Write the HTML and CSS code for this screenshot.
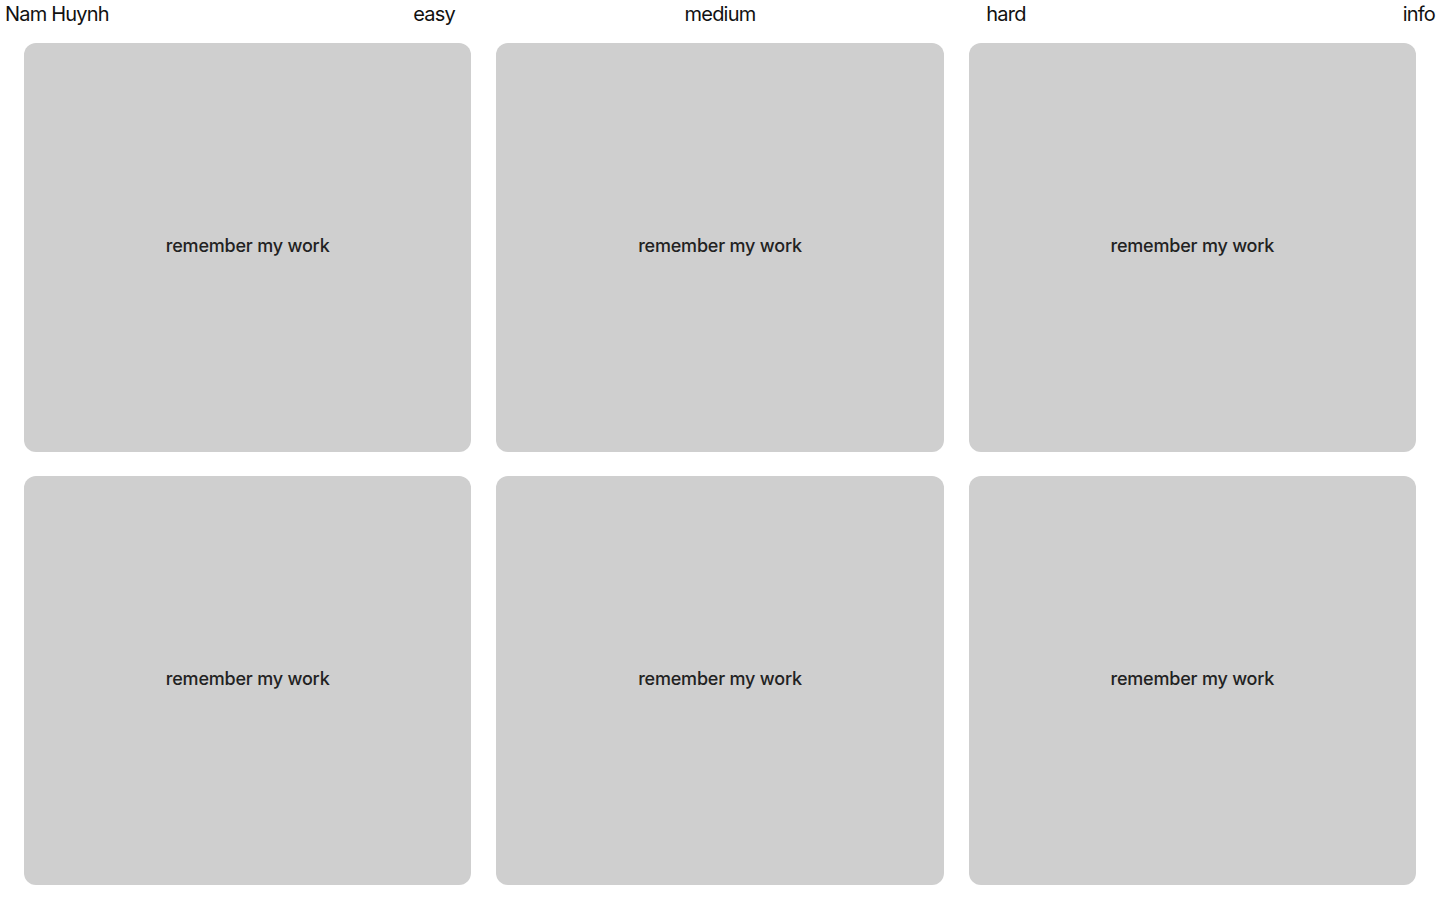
FILE: index.html
```html
<!DOCTYPE html>
<html lang="en">
<head>
  <meta charset="UTF-8">
  <meta name="viewport" content="width=device-width, initial-scale=1.0">
  <title>Nam Huynh</title>
  <link rel="stylesheet" href="styles.css">
</head>
<body>
  <nav class="nav">
    <a class="nav-item nav-name" href="#">Nam Huynh</a>
    <a class="nav-item" href="#">easy</a>
    <a class="nav-item" href="#">medium</a>
    <a class="nav-item" href="#">hard</a>
    <a class="nav-item nav-info" href="#">info</a>
  </nav>

  <main class="grid">
    <div class="card"><span>remember my work</span></div>
    <div class="card"><span>remember my work</span></div>
    <div class="card"><span>remember my work</span></div>
    <div class="card"><span>remember my work</span></div>
    <div class="card"><span>remember my work</span></div>
    <div class="card"><span>remember my work</span></div>
  </main>
</body>
</html>
```

FILE: styles.css
```css
body {
  margin: 0;
  background: #fff;
  font-family: Inter, "Liberation Sans", Arial, sans-serif;
  color: #111;
}
.nav {
  display: grid;
  grid-template-columns: repeat(5, 1fr);
  padding: 0 5px;
  height: 28px;
  align-items: center;
}
.nav-item {
  color: #111;
  text-decoration: none;
  font-size: 20px;
  letter-spacing: -0.8px;
  text-align: center;
}
.nav-name {
  text-align: left;
}
.nav-info {
  text-align: right;
}
.grid {
  display: grid;
  grid-template-columns: repeat(3, 1fr);
  gap: 24px 25px;
  padding: 15px 24px 0;
}
.card {
  height: 409px;
  background: #cfcfcf;
  border-radius: 12px;
  display: flex;
  align-items: center;
  justify-content: center;
}
.card span {
  font-size: 18px;
  font-weight: 500;
  color: #222;
  letter-spacing: -0.2px;
  margin-top: -5px;
}
```
